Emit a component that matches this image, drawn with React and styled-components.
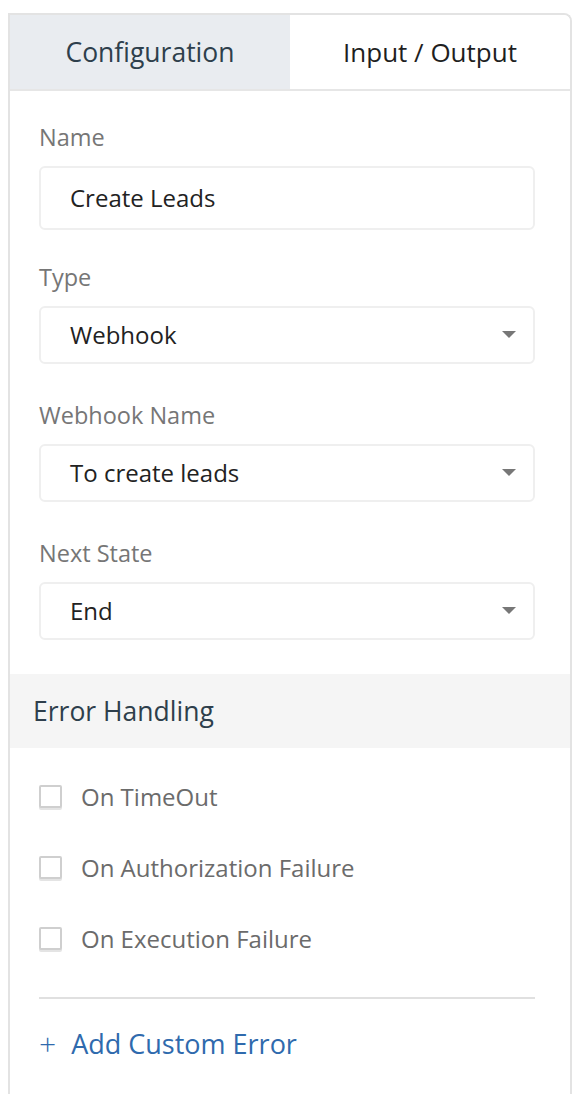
import React, {useState} from 'react';
import styled, {createGlobalStyle} from "styled-components";

const GlobalStyle = createGlobalStyle`
  html, body {
    margin: 0;
    padding: 0;
    background: #fff;
  }
  body {
    font-family: "Open Sans", "Lato", sans-serif;
    -webkit-font-smoothing: antialiased;
  }
`;

const fields = [
	{label: 'Name', value: 'Create Leads', select: false},
	{label: 'Type', value: 'Webhook', select: true},
	{label: 'Webhook Name', value: 'To create leads', select: true},
	{label: 'Next State', value: 'End', select: true},
];

const errors = ['On TimeOut', 'On Authorization Failure', 'On Execution Failure'];

const Caret = () => (
	<svg width="14" height="8" viewBox="0 0 14 8">
		<path d="M0 0 L14 0 L7 7 Z" fill="#777" />
	</svg>
);

const App = () => {
	const [tab, setTab] = useState('config');
	const [checked, setChecked] = useState({});

	const toggle = (name) => {
		setChecked({...checked, [name]: !checked[name]});
	};

	return (<Page>
			<GlobalStyle />
			<Panel>
				<Tabs>
					<Tab active={tab === 'config'} onClick={() => setTab('config')}>Configuration</Tab>
					<Tab active={tab === 'io'} onClick={() => setTab('io')}>Input / Output</Tab>
				</Tabs>

				<Form>
					{fields.map((f) => (
						<Field key={f.label} select={f.select}>
							<Label>{f.label}</Label>
							<Box select={f.select}>
								<span>{f.value}</span>
								{f.select && <Caret />}
							</Box>
						</Field>
					))}
				</Form>

				<SectionHead>Error Handling</SectionHead>

				<Checks>
					{errors.map((e) => (
						<CheckRow key={e} onClick={() => toggle(e)}>
							<CheckBox checked={!!checked[e]} />
							<span>{e}</span>
						</CheckRow>
					))}
				</Checks>

				<Footer>
					<AddLink>
						<Plus>+</Plus>
						Add Custom Error
					</AddLink>
				</Footer>
			</Panel>
		</Page>
	);
};

export default App;

const Page = styled.div`
  padding: 13px 10px 0 8px;
  height: 1094px;
  box-sizing: border-box;
  overflow: hidden;
`;

const Panel = styled.div`
  border: 2px solid #e3e3e3;
  border-bottom: none;
  border-top-right-radius: 8px;
  min-height: 1100px;
  background: #fff;
`;

const Tabs = styled.div`
  display: flex;
  height: 74px;
  border-bottom: 2px solid #e6e6e6;
  border-top-right-radius: 6px;
  overflow: hidden;
`;

const Tab = styled.div`
  flex: 1;
  display: flex;
  align-items: center;
  justify-content: center;
  font-size: ${({active}) => active ? '26.5px' : '26px'};
  line-height: 34px;
  background: ${({active}) => active ? '#e9ecf0' : '#fff'};
  color: ${({active}) => active ? '#2e3f4c' : '#1f1f1f'};
  cursor: pointer;
`;

const Form = styled.div`
  padding: 31px 35px 0 29px;
  display: flex;
  flex-direction: column;
`;

const Field = styled.div`
  display: flex;
  flex-direction: column;
  gap: 14px;
  margin-bottom: ${({select}) => select ? '36px' : '32px'};

  &:last-child {
    margin-bottom: 34px;
  }
`;

const Label = styled.div`
  font-size: 23.5px;
  color: #767676;
  line-height: 30px;
`;

const Box = styled.div`
  height: ${({select}) => select ? '58px' : '64px'};
  box-sizing: border-box;
  border: 2px solid #efefef;
  border-radius: 6px;
  display: flex;
  align-items: center;
  justify-content: space-between;
  padding: 0 17px 0 29px;
  font-size: 24px;
  line-height: 30px;
  color: #222;
`;

const SectionHead = styled.div`
  background: #f5f5f5;
  height: 74px;
  display: flex;
  align-items: center;
  padding-left: 23px;
  font-size: 26.5px;
  line-height: 34px;
  color: #2e3f4c;
`;

const Checks = styled.div`
  padding: 36px 35px 0 29px;
  display: flex;
  flex-direction: column;
  gap: 46px;
`;

const CheckRow = styled.label`
  display: flex;
  align-items: center;
  gap: 19px;
  font-size: 24px;
  line-height: 25px;
  color: #6b6b6b;
  height: 25px;
  cursor: pointer;
`;

const CheckBox = styled.span`
  width: 23px;
  height: 23px;
  flex-shrink: 0;
  box-sizing: border-box;
  border: 2px solid #cfcfcf;
  border-radius: 2px;
  box-shadow: 0 2px 0 #e4e4e4;
  background: ${({checked}) => checked ? '#2f6aad' : '#fff'};
`;

const Footer = styled.div`
  margin: 46px 35px 0 29px;
  border-top: 2px solid #e0e0e0;
  padding-top: 29px;
`;

const AddLink = styled.div`
  display: flex;
  align-items: center;
  font-size: 27px;
  line-height: 32px;
  color: #2f6aad;
  cursor: pointer;
`;

const Plus = styled.span`
  font-size: 30px;
  font-weight: 300;
  margin-right: 15px;
  line-height: 1;
`;
